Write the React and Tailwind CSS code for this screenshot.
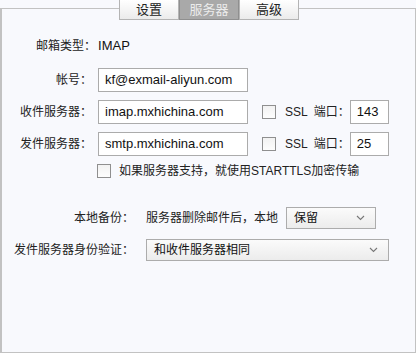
import React from 'react';

const font = { fontFamily: '"Liberation Sans", "Noto Sans CJK SC", sans-serif' };

const Chevron = () => (
  <svg width="9" height="6" viewBox="0 0 9 6" className="text-[#777]">
    <path d="M1 1l3.5 3.5L8 1" fill="none" stroke="currentColor" strokeWidth="1.1" />
  </svg>
);

const Box = () => <span className="inline-block w-[14px] h-[14px] border border-[#8f8f8f] bg-gradient-to-b from-[#f2f2f2] to-[#fdfdfd]" />;

const Field = ({ value, w }) => (
  <div className={`h-[24px] ${w} border border-[#ababab] bg-white flex items-center px-[6px] text-[13px] text-[#111] whitespace-nowrap overflow-hidden`}>{value}</div>
);

const tabs = ['设置', '服务器', '高级'];

export default function App() {
  return (
    <div className="w-[416px] h-[353px] bg-[#f8f9fd] text-[12px] text-[#222]" style={font}>
      <div className="relative z-10 flex ml-[119px] h-[20px] text-[13px]">
        {tabs.map((t, i) => (
          <div
            key={t}
            className={
              i === 1
                ? 'w-[60px] h-[20px] flex items-center justify-center bg-[#a9a9a9] text-[#ececec] border-b border-[#8a8a8a] border-x border-[#8f8f8f]'
                : 'w-[60px] h-[20px] flex items-center justify-center bg-gradient-to-b from-white to-[#ebebeb] border-x border-b border-[#b4b4b4] text-[#222]'
            }
          >
            {t}
          </div>
        ))}
      </div>
      <div className="-mt-[12px] h-[345px] border border-l-2 border-[#c2c2c2] bg-[#f8f9fd]">
        <div className="flex items-center h-[18px] mt-[28px] pl-[34px]">
          <span>邮箱类型：</span>
          <span className="ml-[2px] text-[13px] text-[#111]">IMAP</span>
        </div>

        <div className="flex items-center mt-[13px]">
          <span className="w-[90px] text-right">帐号：</span>
          <span className="ml-[6px]"><Field value="kf@exmail-aliyun.com" w="w-[150px]" /></span>
        </div>

        <div className="flex items-center mt-[8px]">
          <span className="w-[90px] text-right">收件服务器：</span>
          <span className="ml-[6px]"><Field value="imap.mxhichina.com" w="w-[150px]" /></span>
          <span className="ml-[14px] flex items-center"><Box /></span>
          <span className="ml-[9px]">SSL</span>
          <span className="ml-[6px]">端口：</span>
          <span><Field value="143" w="w-[39px]" /></span>
        </div>

        <div className="flex items-center mt-[8px]">
          <span className="w-[90px] text-right">发件服务器：</span>
          <span className="ml-[6px]"><Field value="smtp.mxhichina.com" w="w-[150px]" /></span>
          <span className="ml-[14px] flex items-center"><Box /></span>
          <span className="ml-[9px]">SSL</span>
          <span className="ml-[6px]">端口：</span>
          <span><Field value="25" w="w-[39px]" /></span>
        </div>

        <div className="flex items-center mt-[6px] pl-[95px]">
          <Box />
          <span className="ml-[8px]">如果服务器支持，就使用STARTTLS加密传输</span>
        </div>

        <div className="flex items-center mt-[27px]">
          <span className="w-[132px] text-right">本地备份：</span>
          <span className="ml-[12px]">服务器删除邮件后，本地</span>
          <div className="ml-auto mr-[39px] w-[90px] h-[22px] border border-[#acacac] bg-gradient-to-b from-[#fbfbfb] to-[#ececec] flex items-center justify-between pl-[7px] pr-[10px]">
            <span className="text-[#111]">保留</span>
            <Chevron />
          </div>
        </div>

        <div className="flex items-center mt-[10px]">
          <span className="w-[132px] text-right">发件服务器身份验证：</span>
          <div className="ml-[12px] w-[243px] h-[22px] border border-[#acacac] bg-gradient-to-b from-[#fbfbfb] to-[#ececec] flex items-center justify-between pl-[7px] pr-[10px]">
            <span className="text-[#111]">和收件服务器相同</span>
            <Chevron />
          </div>
        </div>
      </div>
    </div>
  );
}
